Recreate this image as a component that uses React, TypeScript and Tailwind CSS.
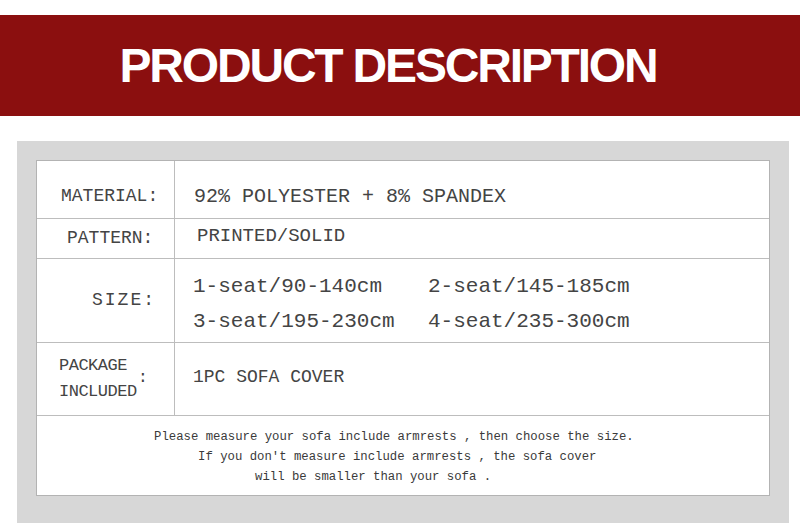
export default function App() {
  const mono = { fontFamily: '"Liberation Mono", "DejaVu Sans Mono", monospace' }

  return (
    <div className="w-[800px] h-[532px] bg-white overflow-hidden">
      <div className="mt-[15px] h-[101px] bg-[#8b0f0f] flex items-center justify-center pr-[24px]">
        <h1
          className="text-white font-bold text-[48px] leading-none tracking-[-2.2px]"
          style={{ fontFamily: '"Liberation Sans", Arial, sans-serif' }}
        >
          PRODUCT DESCRIPTION
        </h1>
      </div>

      <div className="mt-[25px] ml-[17px] w-[772px] h-[382px] bg-[#d7d7d7] pt-[19px] pl-[19px]">
        <div className="w-[734px] bg-white border border-[#b3b3b3] text-[#444]" style={mono}>
          <div className="flex h-[58px] border-b border-[#bdbdbd]">
            <div className="w-[138px] border-r border-[#bdbdbd] flex items-center pt-[14px] pl-[24px] text-[18px]">
              MATERIAL:
            </div>
            <div className="flex-1 flex items-center pt-[14px] pl-[19px] text-[20px]">
              92% POLYESTER + 8% SPANDEX
            </div>
          </div>

          <div className="flex h-[40px] border-b border-[#bdbdbd]">
            <div className="w-[138px] border-r border-[#bdbdbd] flex items-center pl-[30px] text-[18px]">
              PATTERN:
            </div>
            <div className="flex-1 flex items-center pl-[22px] pb-[4px] text-[19px]">
              PRINTED/SOLID
            </div>
          </div>

          <div className="flex h-[84px] border-b border-[#bdbdbd]">
            <div className="w-[138px] border-r border-[#bdbdbd] flex items-center pl-[55px] text-[18px] tracking-[2px]">
              SIZE:
            </div>
            <div className="flex-1 flex flex-col justify-center pl-[18px] pt-[6px] text-[21px] leading-[35px]">
              <div className="flex">
                <span className="w-[235px]">1-seat/90-140cm</span>
                <span>2-seat/145-185cm</span>
              </div>
              <div className="flex">
                <span className="w-[235px]">3-seat/195-230cm</span>
                <span>4-seat/235-300cm</span>
              </div>
            </div>
          </div>

          <div className="flex h-[73px] border-b border-[#bdbdbd]">
            <div className="w-[138px] border-r border-[#bdbdbd] flex items-center pl-[22px] text-[17px]">
              <div className="leading-[26px] tracking-[-0.5px]">
                <div>PACKAGE</div>
                <div>INCLUDED</div>
              </div>
              <span className="ml-[1px] -mt-[2px]">:</span>
            </div>
            <div className="flex-1 flex items-center pl-[18px] pb-[4px] text-[18px]">
              1PC SOFA COVER
            </div>
          </div>

          <div className="h-[79px] pt-[11px] text-[12.3px] leading-[20px] text-[#3a3a3a]">
            <div className="pl-[117px]">Please measure your sofa include armrests , then choose the size.</div>
            <div className="pl-[161px]">If you don't measure include armrests , the sofa cover</div>
            <div className="pl-[218px]">will be smaller than your sofa .</div>
          </div>
        </div>
      </div>
    </div>
  )
}
